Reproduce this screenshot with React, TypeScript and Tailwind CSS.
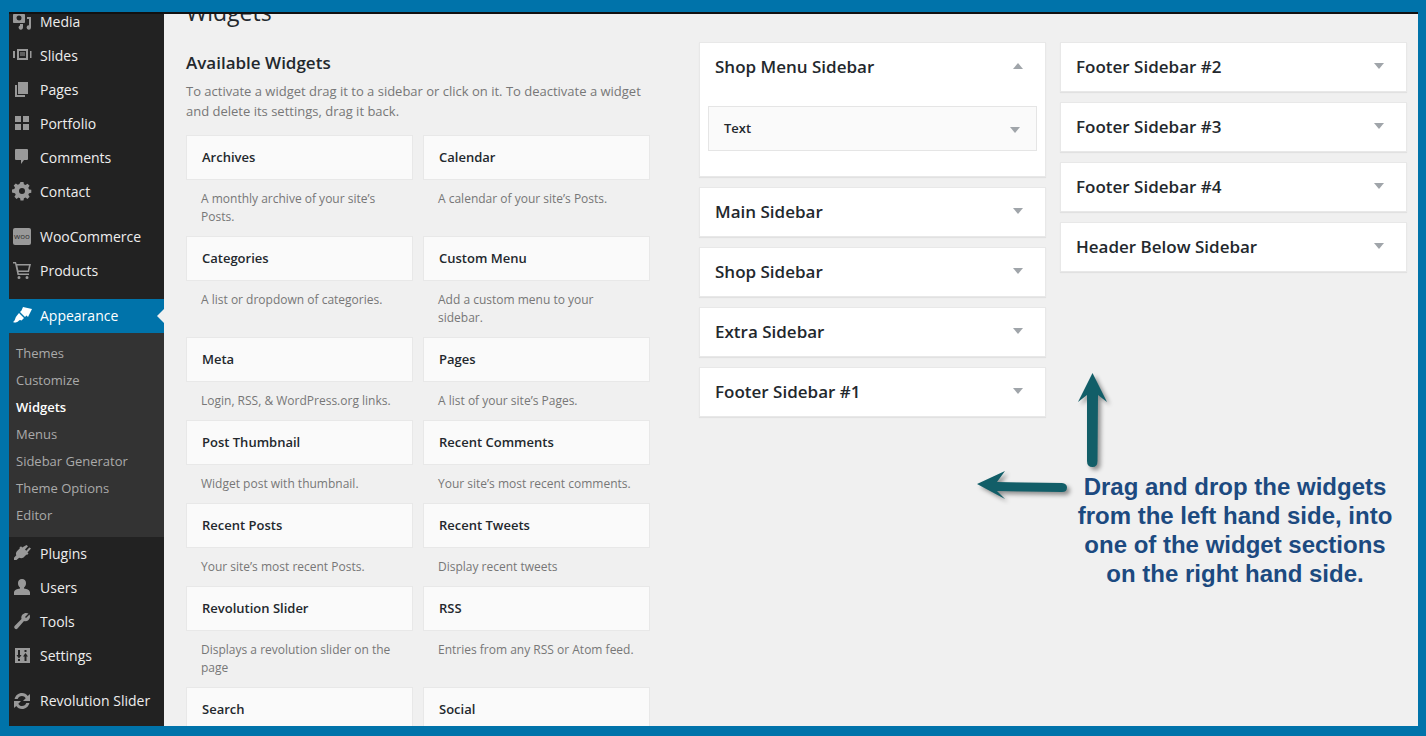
import React from "react";

type Widget = { name: string; desc: string };

const rows: { h: string; items: Widget[] }[] = [
  {
    h: "h-[101px]",
    items: [
      { name: "Archives", desc: "A monthly archive of your site’s Posts." },
      { name: "Calendar", desc: "A calendar of your site’s Posts." },
    ],
  },
  {
    h: "h-[101px]",
    items: [
      { name: "Categories", desc: "A list or dropdown of categories." },
      { name: "Custom Menu", desc: "Add a custom menu to your sidebar." },
    ],
  },
  {
    h: "h-[83px]",
    items: [
      { name: "Meta", desc: "Login, RSS, & WordPress.org links." },
      { name: "Pages", desc: "A list of your site’s Pages." },
    ],
  },
  {
    h: "h-[83px]",
    items: [
      { name: "Post Thumbnail", desc: "Widget post with thumbnail." },
      { name: "Recent Comments", desc: "Your site’s most recent comments." },
    ],
  },
  {
    h: "h-[83px]",
    items: [
      { name: "Recent Posts", desc: "Your site’s most recent Posts." },
      { name: "Recent Tweets", desc: "Display recent tweets" },
    ],
  },
  {
    h: "h-[101px]",
    items: [
      { name: "Revolution Slider", desc: "Displays a revolution slider on the page" },
      { name: "RSS", desc: "Entries from any RSS or Atom feed." },
    ],
  },
  {
    h: "h-[83px]",
    items: [
      { name: "Search", desc: "" },
      { name: "Social", desc: "" },
    ],
  },
];

const icons: Record<string, string> = {
  Media:
    "M13 11V4c0-.55-.45-1-1-1h-1.670L9 1H5L3.670 3H2c-.55 0-1 .45-1 1v7c0 .55.45 1 1 1h10c.55 0 1-.45 1-1zM7 4.500a2.500 2.500 0 1 1 0 5 2.500 2.500 0 0 1 0-5zM15 6h4v10.500a2.200 2.200 0 1 1-2-2.200V8h-2V6zM8 13h3v3.500a2.200 2.200 0 1 1-3-2V13z",
  Slides: "M5 4h11v11H5V4zm2 2v7h7V6H7zm1 1.500h5v1H8zm0 2h5v1H8zM1 6h2v7H1zM18 6h1.500v7H18z",
  Pages: "M6 3h10v12H6zM3 6h2v10h8v2H3z",
  Portfolio: "M3 3h6v6H3zM11 3h6v6h-6zM3 11h6v6H3zM11 11h6v6h-6z",
  Comments: "M4 2h11a1 1 0 0 1 1 1v9a1 1 0 0 1-1 1h-3l-3 4v-4H4a1 1 0 0 1-1-1V3a1 1 0 0 1 1-1z",
  Contact:
    "M8.500 1h3l.400 2.300 1.600.700 2-1.300 2.100 2.100-1.300 2 .700 1.600 2.300.400v3l-2.300.400-.700 1.600 1.300 2-2.100 2.100-2-1.300-1.600.700-.400 2.300h-3l-.400-2.300-1.600-.700-2 1.300-2.100-2.100 1.300-2-.700-1.600L0 11.500v-3l2.300-.400.700-1.600-1.300-2L3.800 2.400l2 1.300 1.600-.700L8.500 1zM10 7a3 3 0 1 0 0 6 3 3 0 0 0 0-6z",
  Products:
    "M1 2h3l.600 2H19l-2 8H6.500l.400 1.500H17V15H5.500L3 3.500H1V2zm4.300 3.500 1.100 5h9.400l1.200-5H5.300zM7 16a1.500 1.500 0 1 1 0 3 1.500 1.500 0 0 1 0-3zm8 0a1.500 1.500 0 1 1 0 3 1.500 1.500 0 0 1 0-3z",
  Appearance:
    "M11 2 20 4 16 12 14.500 10.500 13 12 8 7 9.500 5.500ZM7 8 12 13 9.500 15.500C8 14.500 7.500 15 6.500 16 5 17.500 3 18 1 17 2.500 16 3 14.500 3.500 13 4 11.500 4.500 11 5 10.500Z",
  Plugins:
    "M14.500 2l1.500 1.200-3 3.300 1.300 1.200 3-3.200L19 5.500l-3.500 4 1 1-1.500 1.500-.500-.500-3 3c-1.300 1-3 1-4.300.300L4.500 17H2v-2.300l2.300-2.500c-.600-1.300-.400-2.700.600-3.900l3-3-.500-.500L9 3.300l1.200 1.100z",
  Users:
    "M10 2a4 4 0 0 1 4 4.500c0 2-1.300 3.500-2 4v1c3 .500 6 1.500 6 4V18H2v-2.500c0-2.500 3-3.500 6-4v-1c-.700-.500-2-2-2-4A4 4 0 0 1 10 2z",
  Tools:
    "M16.500 2.500 13 6l1 1 3.500-3.500c1 2 .500 4-1 5.500-1.300 1.200-3 1.500-4.500 1L5.500 17.500a1.800 1.800 0 0 1-2.700-.100c-.800-.800-.800-1.900 0-2.700L9.500 8c-.500-1.500-.200-3.200 1-4.500 1.500-1.500 4-2 6-1z",
  Settings:
    "M3 3h15v15H3V3zm3 2v5H4.500L7 13.500 9.500 10H8V5H6zm7.500 3L11 11.500h1.500V16h2v-4.500H16zM6 14v2h2v-2zm6.500-9v2h2V5z",
  "Revolution Slider":
    "M10 3c2.500 0 4.500 1.200 5.700 3L18 4v7h-7l2.700-2.700C12.900 6.900 11.500 6 10 6 8 6 6.300 7.300 5.700 9H2.600C3.300 5.600 6.300 3 10 3zM2 13v-2h7l-2.700 2.700C7.100 15.100 8.500 16 10 16c2 0 3.700-1.300 4.300-3h3.100c-.700 3.400-3.700 6-7.400 6-2.500 0-4.500-1.200-5.700-3L2 18z",
};

const MenuItem = ({ label, mt }: { label: string; mt?: string }) => (
  <div className={`flex h-[34px] items-center pl-[3px] ${mt ?? ""}`}>
    {label === "WooCommerce" ? (
      <span className="ml-px mr-px flex h-[17px] w-[18px] shrink-0 items-center justify-center rounded-[2px] bg-[#999] text-[8px] leading-none text-[#333]">
        woo
      </span>
    ) : (
      <svg viewBox="0 0 20 20" className="h-5 w-5 shrink-0 fill-[#999]">
        <path d={icons[label]} />
      </svg>
    )}
    <span className="ml-[8px] text-[14px] text-[#eee]">{label}</span>
  </div>
);

const Sidebar = () => (
  <aside className="flex w-[155px] shrink-0 flex-col overflow-hidden bg-[#222]">
    <div className="-mt-[10px]">
      {["Media", "Slides", "Pages", "Portfolio", "Comments", "Contact"].map((l) => (
        <MenuItem key={l} label={l} />
      ))}
      <MenuItem label="WooCommerce" mt="mt-[11px]" />
      <MenuItem label="Products" />
      <div className="relative mt-[12px] flex h-[34px] items-center bg-[#0073aa] pb-[2px] pl-[3px] text-white">
        <svg viewBox="0 0 20 20" className="h-5 w-5 shrink-0 fill-white">
          <path d={icons.Appearance} />
        </svg>
        <span className="ml-[8px] text-[14px]">Appearance</span>
        <span className="absolute right-0 top-[10px] h-0 w-0 border-y-[7px] border-r-[7px] border-y-transparent border-r-[#f0f0f0]" />
      </div>
      <div className="h-[204px] bg-[#333] pt-[7px] text-[13px] text-[#aaa]">
        {["Themes", "Customize", "Widgets", "Menus", "Sidebar Generator", "Theme Options", "Editor"].map((l) => (
          <div
            key={l}
            className={`flex h-[27px] items-center pl-[7px] ${l === "Widgets" ? "font-semibold text-white" : ""}`}
          >
            {l}
          </div>
        ))}
      </div>
      <div className="-mt-px">
        {["Plugins", "Users", "Tools", "Settings"].map((l) => (
          <MenuItem key={l} label={l} />
        ))}
      </div>
      <MenuItem label="Revolution Slider" mt="mt-[11px]" />
    </div>
  </aside>
);

const WidgetCard = ({ w }: { w: Widget }) => (
  <div className="w-[227px]">
    <div className="flex h-[45px] items-center border border-[#e8e8e8] bg-[#fafafa] px-[15px] text-[13px] font-semibold text-[#23282d]">
      {w.name}
    </div>
    <p className="mt-[10px] px-[15px] text-[12px] leading-[18px] text-[#777]">{w.desc}</p>
  </div>
);

const SidebarBox = ({ name, up, children }: { name: string; up?: boolean; children?: React.ReactNode }) => (
  <div className="w-[347px] border border-[#e8e8e8] bg-white shadow-[0_1px_1px_rgba(0,0,0,0.06)]">
    <div className="flex h-[48px] items-center justify-between pl-[15px] pr-[22px]">
      <span className="text-[17px] font-semibold text-[#23282d]">{name}</span>
      <span
        className={`-mt-[3px] h-0 w-0 border-x-[5px] border-x-transparent ${
          up ? "border-b-[6px] border-b-[#a0a5aa]" : "border-t-[6px] border-t-[#a0a5aa]"
        }`}
      />
    </div>
    {children}
  </div>
);

export default function App() {
  return (
    <div className="h-[736px] w-[1426px] overflow-hidden bg-[#0073aa] pb-[10px] pl-[9px] pr-[8px] pt-[12px]">
      <div className="flex h-full border-t-2 border-[#111] bg-[#f0f0f0] font-['Open_Sans',sans-serif]">
        <Sidebar />
        <main className="flex min-w-0 flex-1 overflow-hidden">
          <section className="w-[535px] shrink-0 pl-[22px]">
            <h1 className="-mt-[17px] h-[30px] text-[23px] leading-[30px] text-[#23282d]">Widgets</h1>
            <h2 className="mt-[25px] text-[17px] font-semibold leading-[22px] text-[#23282d]">Available Widgets</h2>
            <p className="mt-[7px] w-[470px] text-[13px] leading-[20px] text-[#777]">
              To activate a widget drag it to a sidebar or click on it. To deactivate a widget and delete its settings,
              drag it back.
            </p>
            <div className="mt-[14px] flex flex-col">
              {rows.map((r) => (
                <div key={r.items[0].name} className={`flex shrink-0 gap-[10px] ${r.h}`}>
                  {r.items.map((w) => (
                    <WidgetCard key={w.name} w={w} />
                  ))}
                </div>
              ))}
            </div>
          </section>
          <section className="relative flex-1 pt-[28px]">
            <div className="flex gap-[14px]">
              <div className="flex flex-col gap-[10px]">
                <SidebarBox name="Shop Menu Sidebar" up>
                  <div className="mx-[8px] mb-[25px] mt-[15px] flex h-[45px] items-center justify-between border border-[#e5e5e5] bg-[#fafafa] pl-[15px] pr-[16px] text-[13px] font-semibold text-[#23282d]">
                    Text
                    <span className="mt-[2px] h-0 w-0 border-x-[5px] border-t-[6px] border-x-transparent border-t-[#a0a5aa]" />
                  </div>
                </SidebarBox>
                {["Main Sidebar", "Shop Sidebar", "Extra Sidebar", "Footer Sidebar #1"].map((n) => (
                  <SidebarBox key={n} name={n} />
                ))}
              </div>
              <div className="flex flex-col gap-[10px]">
                {["Footer Sidebar #2", "Footer Sidebar #3", "Footer Sidebar #4", "Header Below Sidebar"].map((n) => (
                  <SidebarBox key={n} name={n} />
                ))}
              </div>
            </div>
            {/* annotations drawn over the screenshot */}
            <svg viewBox="0 0 92 30" className="absolute left-[278px] top-[456px] h-[30px] w-[92px] overflow-visible">
              <path
                d="M0 14 28 1 20 12 85 13Q90 13.500 90 17.500 90 22 85 22L20 21 28 29Z"
                fill="#125e68"
                className="drop-shadow-[3px_3px_2px_rgba(0,0,0,0.4)]"
              />
            </svg>
            <svg viewBox="0 0 30 94" className="absolute left-[379px] top-[359px] h-[94px] w-[30px] overflow-visible">
              <path
                d="M14.500 0 29 29 20 22 19.500 88Q19.500 94 14.500 94 9 94 9 88L9 22 0 29Z"
                fill="#125e68"
                className="drop-shadow-[3px_3px_2px_rgba(0,0,0,0.4)]"
              />
            </svg>
            <p className="absolute left-[366px] top-[458px] w-[340px] text-center font-['Liberation_Sans',sans-serif] text-[24px] font-bold leading-[29px] text-[#1c4a80]">
              Drag and drop the widgets
              <br />
              from the left hand side, into
              <br />
              one of the widget sections
              <br />
              on the right hand side.
            </p>
          </section>
        </main>
      </div>
    </div>
  );
}
